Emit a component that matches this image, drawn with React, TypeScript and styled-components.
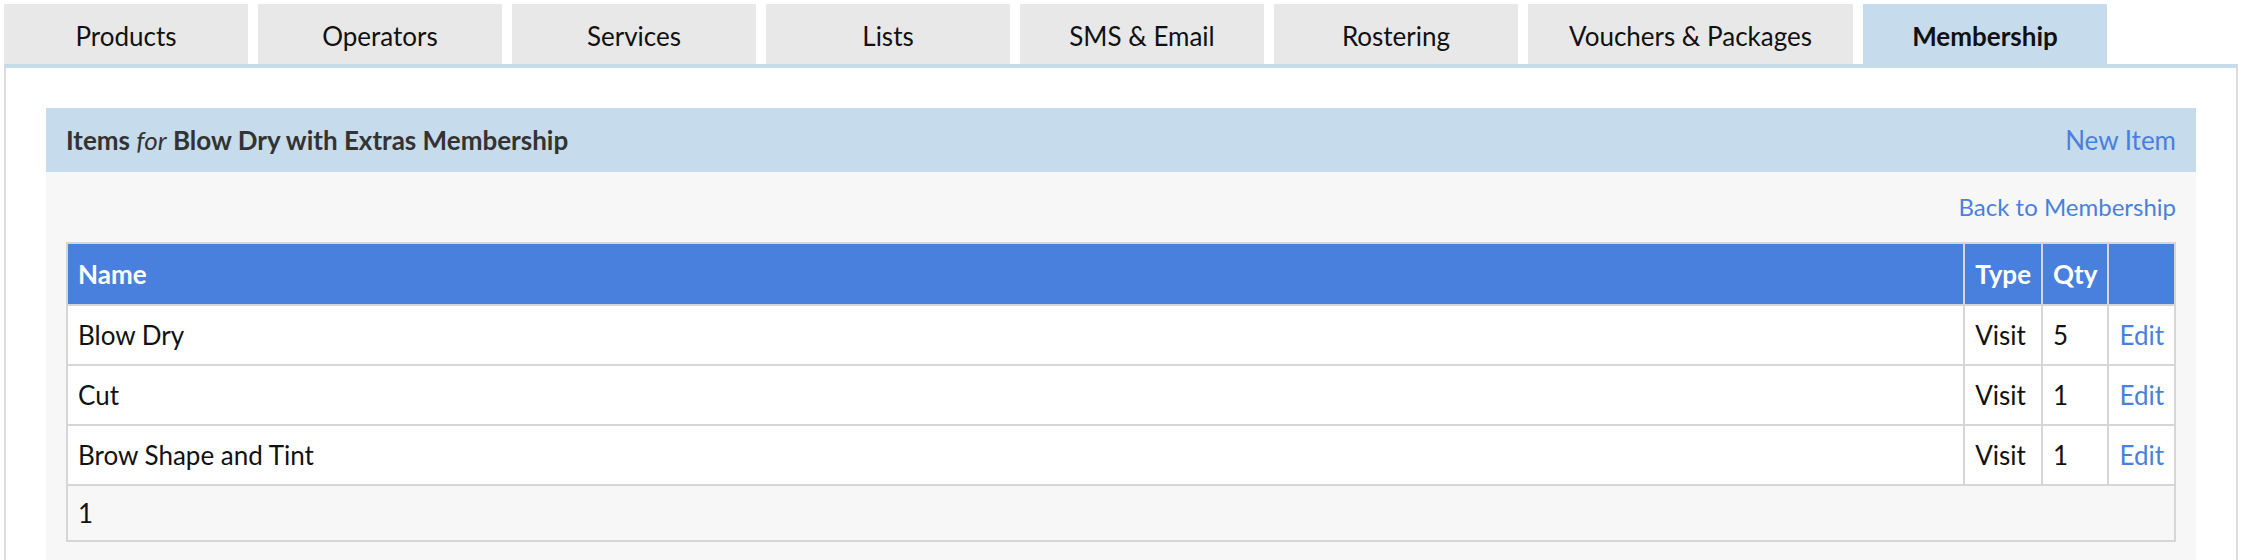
import React from "react";
import styled, { createGlobalStyle } from "styled-components";

const GlobalStyle = createGlobalStyle`
  body {
    margin: 4px 6px 0 4px;
    background: #fff;
    color: #111;
    font-family: Lato, "Open Sans", "Liberation Sans", sans-serif;
    font-size: 26px;
  }
`;

const TabBar = styled.div`
  display: flex;
  gap: 10px;
`;

const Tab = styled.div<{ $active?: boolean }>`
  min-width: 244px;
  height: 60px;
  box-sizing: border-box;
  padding: 4px 41px 0;
  display: flex;
  align-items: center;
  justify-content: center;
  white-space: nowrap;
  background: ${props => (props.$active ? "#c6dbeb" : "#e8e8e8")};
  font-weight: ${props => (props.$active ? 700 : 400)};
  color: #111;
`;

const Panel = styled.div`
  border-top: 4px solid #c6dbeb;
  border-left: 2px solid #dcdcdc;
  border-right: 2px solid #dcdcdc;
  padding: 40px;
  background: #fff;
`;

const SectionHeader = styled.div`
  height: 64px;
  box-sizing: border-box;
  padding: 0 20px;
  display: flex;
  align-items: center;
  justify-content: space-between;
  background: #c6dbeb;
  color: #333;
  font-weight: 700;

  em {
    font-weight: 400;
  }
`;

const Link = styled.a`
  color: #4a80dd;
  font-weight: 400;
  text-decoration: none;
  cursor: pointer;
`;

const SectionBody = styled.div`
  background: #f7f7f7;
  padding: 20px;
`;

const BackRow = styled.div`
  text-align: right;
  line-height: 30px;
  font-size: 24px;
  margin-bottom: 20px;
`;

const Table = styled.table`
  width: 100%;
  border-collapse: collapse;
`;

const Th = styled.th<{ $fit?: boolean }>`
  background: #4a80dd;
  color: #fff;
  font-weight: 700;
  text-align: left;
  padding: 13px 10px;
  line-height: 34px;
  border: 2px solid #d6d6d6;
  white-space: nowrap;
  width: ${props => (props.$fit ? "1%" : "auto")};
`;

const Td = styled.td<{ $fit?: boolean }>`
  background: #fff;
  padding: 12px 10px;
  line-height: 34px;
  border: 2px solid #d6d6d6;
  white-space: nowrap;
  width: ${props => (props.$fit ? "1%" : "auto")};
`;

const FooterCell = styled.td`
  background: #f7f7f7;
  padding: 10px;
  line-height: 34px;
  border: 2px solid #d6d6d6;
`;

const tabs = [
  "Products",
  "Operators",
  "Services",
  "Lists",
  "SMS & Email",
  "Rostering",
  "Vouchers & Packages",
  "Membership",
];

const items = [
  { name: "Blow Dry", type: "Visit", qty: 5 },
  { name: "Cut", type: "Visit", qty: 1 },
  { name: "Brow Shape and Tint", type: "Visit", qty: 1 },
];

const App: React.FC = () => {
  return (
    <>
      <GlobalStyle />
      <TabBar>
        {tabs.map(t => (
          <Tab key={t} $active={t === "Membership"}>
            {t}
          </Tab>
        ))}
      </TabBar>
      <Panel>
        <SectionHeader>
          <span>
            Items <em>for</em> Blow Dry with Extras Membership
          </span>
          <Link>New Item</Link>
        </SectionHeader>
        <SectionBody>
          <BackRow>
            <Link>Back to Membership</Link>
          </BackRow>
          <Table>
            <thead>
              <tr>
                <Th>Name</Th>
                <Th $fit>Type</Th>
                <Th $fit>Qty</Th>
                <Th $fit></Th>
              </tr>
            </thead>
            <tbody>
              {items.map(item => (
                <tr key={item.name}>
                  <Td>{item.name}</Td>
                  <Td $fit>{item.type}</Td>
                  <Td $fit>{item.qty}</Td>
                  <Td $fit>
                    <Link>Edit</Link>
                  </Td>
                </tr>
              ))}
              <tr>
                <FooterCell colSpan={4}>1</FooterCell>
              </tr>
            </tbody>
          </Table>
        </SectionBody>
      </Panel>
    </>
  );
};

export default App;
